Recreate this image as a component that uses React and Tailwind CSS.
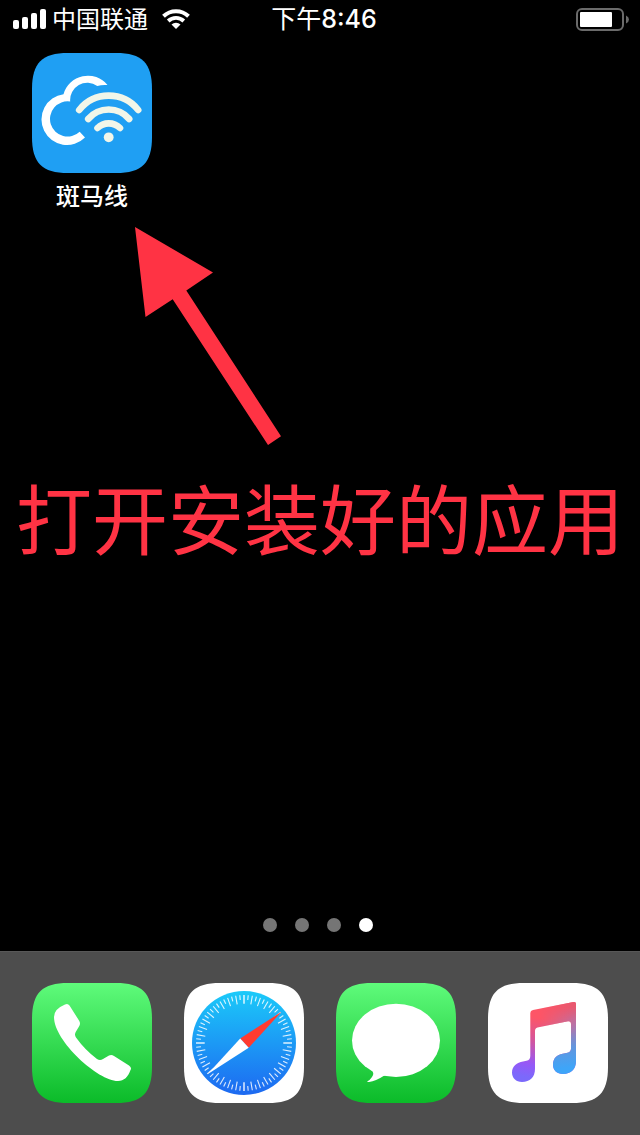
const SQUIRCLE =
  "M36 0H84C110 0 120 10 120 36V84C120 110 110 120 84 120H36C10 120 0 110 0 84V36C0 10 10 0 36 0Z";

function StatusBar() {
  return (
    <header className="grid h-10 grid-cols-[1fr_auto_1fr] items-center pr-[11px] pl-[13px]">
      <div className="flex items-center">
        <svg className="h-[22px] w-[33px]" viewBox="0 0 33 22" fill="#fff" aria-hidden="true">
          <rect x="0" y="11" width="6" height="9" rx="2" />
          <rect x="9" y="8" width="6" height="12" rx="2" />
          <rect x="18" y="4" width="6" height="16" rx="2" />
          <rect x="27" y="0" width="6" height="20" rx="2" />
        </svg>
        <span className="ml-1.5 text-2xl font-normal">中国联通</span>
        <svg className="ml-3.5 h-[22px] w-7" viewBox="0 0 28 22" aria-hidden="true">
          <path d="M1.5 7.2a18 18 0 0 1 25 0" fill="none" stroke="#fff" strokeWidth="4" />
          <path d="M6.2 12a11.4 11.4 0 0 1 15.6 0" fill="none" stroke="#fff" strokeWidth="3.8" />
          <path d="M9.5 15.6a6.6 6.6 0 0 1 9 0L14 20Z" fill="#fff" />
        </svg>
      </div>
      <time className="pl-1.5 text-[25px]">
        下午<span className="font-['Inter'] font-medium">8:46</span>
      </time>
      <svg className="h-[25px] w-[53px] justify-self-end" viewBox="0 0 53 25" aria-hidden="true">
        <rect x="1" y="1" width="46" height="21" rx="5" fill="none" stroke="#6b6b6b" strokeWidth="2" />
        <rect x="4" y="4" width="32" height="15" rx="1" fill="#fff" />
        <path d="M50 7.5q3 1.5 3 4t-3 4Z" fill="#6b6b6b" />
      </svg>
    </header>
  );
}

function CloudWifiIcon() {
  return (
    <svg className="size-[120px]" viewBox="0 0 120 120" aria-hidden="true">
      <path d={SQUIRCLE} fill="#1f9ff3" />
      <path
        d="M75.5 32A25.3 25.3 0 0 0 31.500 41.200A25.500 25.500 0 1 0 53 84.500L47.700 78.700A17.600 17.600 0 1 1 38.200 48.500A17.200 17.200 0 0 1 65.300 33Q70 31.500 75.500 32Z"
        fill="#fff"
      />
      <g fill="none" stroke="#f1f6e9" strokeWidth="6.6" strokeLinecap="round">
        <path d="M47.200 57A37.500 37.500 0 0 1 106.200 57" />
        <path d="M56.200 66A27 27 0 0 1 97.200 66" />
        <path d="M65.500 75A16 16 0 0 1 88 75" />
      </g>
      <circle cx="76.700" cy="84.300" r="4.900" fill="#f1f6e9" />
    </svg>
  );
}

function GreenTile({ id, children }) {
  return (
    <svg className="size-[120px]" viewBox="0 0 120 120" aria-hidden="true">
      <defs>
        <linearGradient id={id} x1="0" y1="0" x2="0" y2="1">
          <stop offset="0" stopColor="#5ffb7b" />
          <stop offset="1" stopColor="#0bbb29" />
        </linearGradient>
      </defs>
      <path d={SQUIRCLE} fill={`url(#${id})`} />
      {children}
    </svg>
  );
}

function PhoneIcon() {
  return (
    <GreenTile id="phone-green">
      <path
        d="M33 21.500Q35.800 20 37.500 22.500L47 37.500Q49 40.500 47 43.500L44 48.500Q42 51.500 44 54.500Q53 67 65 76Q68 78 71 76L77 72.500Q79.500 71.300 82 73L97 82.500Q100 84.500 98.500 87C96 94 92 98 86 98C66 98 22 58 22 34Q22 26 33 21.500Z"
        fill="#fff"
      />
    </GreenTile>
  );
}

function MessagesIcon() {
  return (
    <GreenTile id="messages-green">
      <ellipse cx="60" cy="57.400" rx="44" ry="36.600" fill="#fff" />
      <path d="M35 86.500Q39 90 36 94Q34 97 31.200 98.500Q31.500 99.300 33 99Q40 98 47.500 93Q54 92 55 88Z" fill="#fff" />
    </GreenTile>
  );
}

const TICKS = Array.from({ length: 72 }, (_, i) => i);

function SafariIcon() {
  return (
    <svg className="size-[120px]" viewBox="0 0 120 120" aria-hidden="true">
      <defs>
        <linearGradient id="compass-blue" x1="0" y1="0" x2="0" y2="1">
          <stop offset="0" stopColor="#1bcaf9" />
          <stop offset="1" stopColor="#1d69f1" />
        </linearGradient>
      </defs>
      <path d={SQUIRCLE} fill="#fff" />
      <circle cx="60" cy="60" r="52" fill="url(#compass-blue)" />
      {TICKS.map((i) => (
        <path
          key={i}
          d={i % 2 === 0 ? "M60 12V20.700" : "M60 12V16.800"}
          transform={`rotate(${i * 5} 60 60)`}
          stroke="#fff"
          strokeOpacity={i % 18 === 0 ? 0.65 : 0.85}
          strokeWidth={i % 18 === 0 ? 2 : 1.1}
        />
      ))}
      <path d="M97.500 28.800L56.200 55.400L64.700 64.700Z" fill="#ff3b30" />
      <path d="M23.500 91.200L56.200 55.400L64.700 64.700Z" fill="#fff" />
    </svg>
  );
}

function MusicIcon() {
  return (
    <svg className="size-[120px]" viewBox="0 0 120 120" aria-hidden="true">
      <defs>
        <linearGradient id="note-left" gradientUnits="userSpaceOnUse" x1="50" y1="28" x2="38" y2="94">
          <stop offset="0.100" stopColor="#fd5567" />
          <stop offset="0.450" stopColor="#d3559d" />
          <stop offset="0.800" stopColor="#9658f7" />
          <stop offset="1" stopColor="#7b69fb" />
        </linearGradient>
        <linearGradient id="note-right" gradientUnits="userSpaceOnUse" x1="72" y1="25" x2="78" y2="85">
          <stop offset="0" stopColor="#e8586f" />
          <stop offset="0.300" stopColor="#b873a8" />
          <stop offset="0.650" stopColor="#6495dd" />
          <stop offset="1" stopColor="#3ea5f8" />
        </linearGradient>
        <linearGradient id="note-fade" gradientUnits="userSpaceOnUse" x1="52" y1="0" x2="86" y2="0">
          <stop offset="0" stopColor="#fff" stopOpacity="0" />
          <stop offset="1" stopColor="#fff" />
        </linearGradient>
        <mask id="note-mask">
          <rect width="120" height="120" fill="url(#note-fade)" />
          <rect x="60" y="50" width="60" height="70" fill="#fff" />
        </mask>
        <path
          id="note-shape"
          d="M45 27L85.500 19Q88 18.600 88 21V78C88 86 83 91 75 91C69 91 65 87 65 82C65 75 69 71.500 76 70.500L79.500 69.800Q83 69 83 65.500V41Q83 37.800 80 38.300L49.500 44.500Q47 45 47 48V86C47 94 42 99 34 99C28 99 24 95 24 89.500C24 83 29 79.500 35 78.500L38.500 77.800Q42.300 77 42.300 73V30Q42.300 27.500 45 27Z"
        />
      </defs>
      <path d={SQUIRCLE} fill="#fff" />
      <use href="#note-shape" fill="url(#note-left)" />
      <use href="#note-shape" fill="url(#note-right)" mask="url(#note-mask)" />
    </svg>
  );
}

const DOCK = [
  { name: "电话", Icon: PhoneIcon },
  { name: "Safari", Icon: SafariIcon },
  { name: "信息", Icon: MessagesIcon },
  { name: "音乐", Icon: MusicIcon },
];

export default function App() {
  return (
    <div className="flex min-h-screen flex-col bg-black font-['Inter','Noto_Sans_CJK_SC',sans-serif] text-white">
      <StatusBar />
      <main className="flex flex-1 flex-col">
        <div className="flex px-8 pt-[13px]">
          <button type="button" className="flex flex-col items-center gap-2">
            <CloudWifiIcon />
            <span className="text-2xl font-medium">斑马线</span>
          </button>
        </div>
        <svg className="mt-3.5 ml-[135px] h-[218px] w-[146px]" viewBox="135 227 146 218" aria-hidden="true">
          <path d="M135 227L213 272.500L186.300 290.600L281 436.300L268 445L172.700 299.300L145.500 317Z" fill="#ff3344" />
        </svg>
        <h1 className="mt-5 text-center text-[76px] leading-[112px] font-normal whitespace-nowrap text-[#ff3344]">
          打开安装好的应用
        </h1>
        <div className="mt-auto flex justify-center gap-[18px] pr-1 pb-[19px]">
          <span className="size-3.5 rounded-full bg-[#757575]" />
          <span className="size-3.5 rounded-full bg-[#757575]" />
          <span className="size-3.5 rounded-full bg-[#757575]" />
          <span className="size-3.5 rounded-full bg-white" />
        </div>
      </main>
      <nav className="flex justify-between border-t border-[#585858] bg-[#4d4d4d] px-8 pt-[31px] pb-8">
        {DOCK.map(({ name, Icon }) => (
          <button key={name} type="button" aria-label={name}>
            <Icon />
          </button>
        ))}
      </nav>
    </div>
  );
}
